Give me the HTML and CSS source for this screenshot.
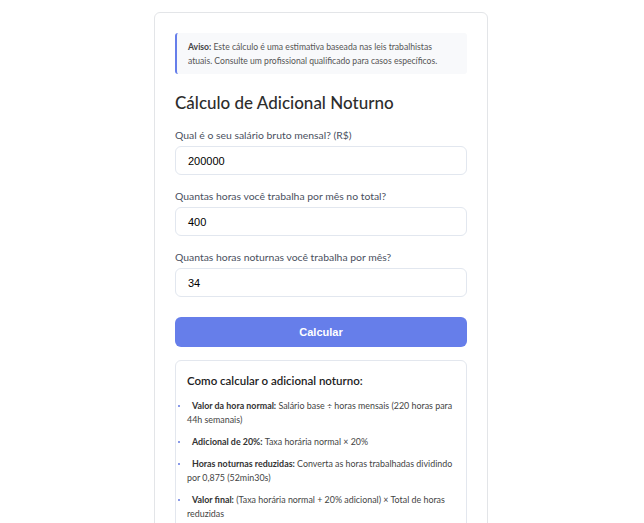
FILE: index.html
```html
<!DOCTYPE html>
<html lang="pt-BR">
<head>
<meta charset="utf-8">
<link rel="stylesheet" href="styles.css">
</head>
<body>
<div class="card">
  <div class="notice"><strong>Aviso:</strong> Este cálculo é uma estimativa baseada nas leis trabalhistas atuais. Consulte um profissional qualificado para casos específicos.</div>
  <h2 class="title">Cálculo de Adicional Noturno</h2>
  <div class="field">
    <label class="label">Qual é o seu salário bruto mensal? (R$)</label>
    <div class="input">200000</div>
  </div>
  <div class="field">
    <label class="label">Quantas horas você trabalha por mês no total?</label>
    <div class="input">400</div>
  </div>
  <div class="field">
    <label class="label">Quantas horas noturnas você trabalha por mês?</label>
    <div class="input">34</div>
  </div>
  <div class="button">Calcular</div>
  <div class="info">
    <h3 class="info-title">Como calcular o adicional noturno:</h3>
    <ul class="list">
      <li><strong>Valor da hora normal:</strong> Salário base ÷ horas mensais (220 horas para 44h semanais)</li>
      <li><strong>Adicional de 20%:</strong> Taxa horária normal × 20%</li>
      <li><strong>Horas noturnas reduzidas:</strong> Converta as horas trabalhadas dividindo por 0,875 (52min30s)</li>
      <li><strong>Valor final:</strong> (Taxa horária normal + 20% adicional) × Total de horas reduzidas</li>
    </ul>
  </div>
</div>
</body>
</html>
```
FILE: styles.css
```css
* { box-sizing: border-box; }
html, body { margin: 0; padding: 0; background: #ffffff; }
body {
  font-family: Lato, "Noto Sans", sans-serif;
  color: #333;
  padding: 12px 2px 0 0;
}
.card {
  width: 334px;
  margin: 0 auto;
  border: 1px solid #e3e5e8;
  border-radius: 6px;
  padding: 20px 20px 0 20px;
  height: 540px;
}
.notice {
  background: #f8f9fb;
  border-left: 2px solid #667eea;
  border-radius: 3px;
  padding: 7px 12px 6px 11px;
  font-size: 8.6px;
  line-height: 14px;
  color: #555;
}
.notice strong { font-weight: 700; color: #444; }
.title {
  margin: 18px 0 0 0;
  font-size: 17px;
  font-weight: 500;
  color: #2d2d2d;
  line-height: 22px;
}
.field { margin-top: 14px; }
.field:first-of-type { margin-top: 13px; }
.label {
  display: block;
  font-size: 10.4px;
  line-height: 14px;
  color: #4a5060;
  margin-bottom: 4px;
}
.input {
  height: 29px;
  border: 1px solid #e2e7ef;
  border-radius: 6px;
  padding: 0 12px;
  display: flex;
  align-items: center;
  font-family: "Liberation Sans", Arial, sans-serif;
  font-size: 11px;
  color: #000;
}
.button {
  margin-top: 20px;
  height: 30px;
  background: #667eea;
  border-radius: 6px;
  color: #fff;
  font-family: "Liberation Sans", Arial, sans-serif;
  font-weight: 700;
  font-size: 11px;
  display: flex;
  align-items: center;
  justify-content: center;
}
.info {
  margin-top: 13px;
  border: 1px solid #e3e7ee;
  border-radius: 6px;
  padding: 12px 12px 10px 11px;
}
.info-title {
  margin: 0;
  font-size: 11.5px;
  font-weight: 600;
  color: #222;
  line-height: 16px;
}
.list {
  list-style: none;
  margin: 10px 0 0 0;
  padding: 0;
}
.list li {
  position: relative;
  font-size: 8.9px;
  line-height: 14px;
  color: #444;
  margin-bottom: 8px;
}
.list li::before {
  content: "";
  position: absolute;
  left: -9px;
  top: 6px;
  width: 2px;
  height: 2px;
  background: #8a9ae8;
}
.list strong { font-weight: 700; color: #333; margin-left: 5px; }
```
